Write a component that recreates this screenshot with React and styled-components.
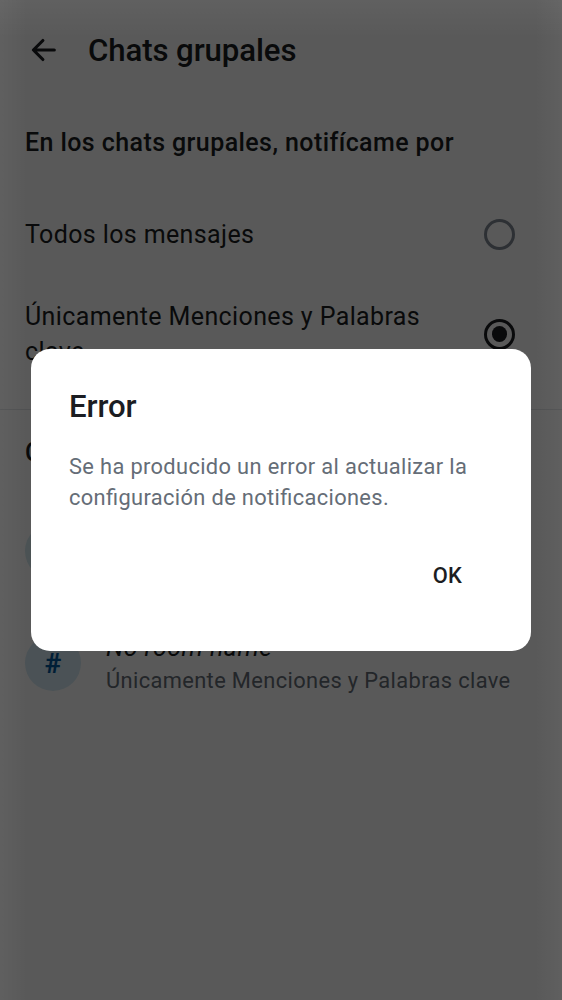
import React from "react";
import styled, { createGlobalStyle } from "styled-components";

const Global = createGlobalStyle`
  * { box-sizing: border-box; }
  body { margin: 0; font-family: Roboto, "Liberation Sans", sans-serif; font-feature-settings: "liga" 1; }
`;
const Screen = styled.main`
  position: relative;
  height: 1000px;
  overflow: hidden;
  background: #fff;
  color: #1b1d22;
`;
const TopBar = styled.header`
  display: flex;
  align-items: center;
  height: 100px;
  padding-left: 25px;
  gap: 25px;
`;
const Title = styled.h1`
  margin: 0;
  padding-top: 1px;
  font-size: 31.2px;
  font-weight: 500;
  line-height: 40px;
  letter-spacing: -0.1px;
`;
const SectionTitle = styled.h2`
  margin: 0;
  display: flex;
  align-items: center;
  height: 85px;
  padding: 0 25px;
  font-size: 25px;
  font-weight: 500;
  line-height: 34px;
  letter-spacing: 0.41px;
`;
const Option = styled.div`
  display: flex;
  align-items: center;
  justify-content: space-between;
  height: ${(p) => p.$height}px;
  padding: 0 47px 0 25px;
  font-size: 25px;
  line-height: 34.3px;
  letter-spacing: 0.38px;
`;
const OptionLabel = styled.span`
  width: 410px;
  padding-top: 1px;
`;
const Radio = styled.span`
  display: flex;
  align-items: center;
  justify-content: center;
  width: 31px;
  height: 31px;
  border: 3px solid ${(p) => (p.$checked ? "#1b1d22" : "#818a95")};
  border-radius: 50%;
  &::after {
    content: "";
    width: 15.6px;
    height: 15.6px;
    border-radius: 50%;
    background: ${(p) => (p.$checked ? "#1b1d22" : "transparent")};
  }
`;
const Divider = styled.hr`
  height: 1px;
  margin: 25px 0 0;
  border: 0;
  background: #e1e4e8;
`;
const Room = styled.div`
  display: flex;
  align-items: center;
  gap: 25px;
  height: 112px;
  padding: 0 25px;
`;
const Avatar = styled.span`
  display: flex;
  align-items: center;
  justify-content: center;
  flex: none;
  width: 56px;
  height: 56px;
  border-radius: 50%;
  background: ${(p) => p.$tint};
  color: #00589c;
  font-size: 28px;
  font-weight: 700;
`;
const RoomText = styled.div`
  display: flex;
  flex-direction: column;
  white-space: nowrap;
`;
const RoomName = styled.span`
  font-size: 25px;
  font-style: italic;
  line-height: 34px;
  letter-spacing: 0.45px;
`;
const RoomMode = styled.span`
  color: #656d77;
  font-size: 21.85px;
  line-height: 31px;
  letter-spacing: 0.37px;
`;
const Scrim = styled.div`
  position: absolute;
  inset: 0;
  display: flex;
  align-items: center;
  justify-content: center;
  background:
    linear-gradient(to bottom, rgba(255, 255, 255, 0.045), transparent 38px),
    linear-gradient(to right, rgba(255, 255, 255, 0.04), transparent 27px),
    linear-gradient(to left, rgba(255, 255, 255, 0.04), transparent 27px),
    rgba(0, 0, 0, 0.65);
`;
const Dialog = styled.section`
  width: 500px;
  height: 302px;
  padding: 38px 38px 36px;
  border-radius: 19px;
  background: #fff;
`;
const DialogTitle = styled.h2`
  margin: 0;
  font-size: 31.2px;
  font-weight: 500;
  line-height: 40px;
  letter-spacing: -0.1px;
`;
const DialogText = styled.p`
  margin: 24px 0 0;
  color: #656d77;
  font-size: 21.85px;
  line-height: 31.2px;
  letter-spacing: 0.35px;
`;
const DialogActions = styled.div`
  display: flex;
  justify-content: flex-end;
  margin-top: 36px;
`;
const DialogButton = styled.button`
  height: 53px;
  padding: 0 31px;
  border: 0;
  background: none;
  color: #1b1d22;
  font: 500 21.85px Roboto, sans-serif;
  letter-spacing: 0.16px;
`;

export default function App() {
  return (
    <Screen>
      <Global />
      <TopBar>
        <svg width="38" height="38" viewBox="0 0 24 24" fill="none" stroke="currentColor" strokeWidth="2" strokeLinecap="round" strokeLinejoin="round">
          <path d="M18.5 12H5.4M11.3 6L5.3 12l6 6" />
        </svg>
        <Title>Chats grupales</Title>
      </TopBar>
      <SectionTitle>En los chats grupales, notifícame por</SectionTitle>
      <Option $height={99}>
        <OptionLabel>Todos los mensajes</OptionLabel>
        <Radio />
      </Option>
      <Option $height={100}>
        <OptionLabel>Únicamente Menciones y Palabras clave</OptionLabel>
        <Radio $checked />
      </Option>
      <Divider />
      <SectionTitle>Configuración personalizada</SectionTitle>
      <Room>
        <Avatar $tint="#d6ebf1" />
      </Room>
      <Room>
        <Avatar $tint="#d6ebf5">#</Avatar>
        <RoomText>
          <RoomName>No room name</RoomName>
          <RoomMode>Únicamente Menciones y Palabras clave</RoomMode>
        </RoomText>
      </Room>
      <Scrim>
        <Dialog role="dialog" aria-modal="true">
          <DialogTitle>Error</DialogTitle>
          <DialogText>Se ha producido un error al actualizar la configuración de notificaciones.</DialogText>
          <DialogActions>
            <DialogButton>OK</DialogButton>
          </DialogActions>
        </Dialog>
      </Scrim>
    </Screen>
  );
}
